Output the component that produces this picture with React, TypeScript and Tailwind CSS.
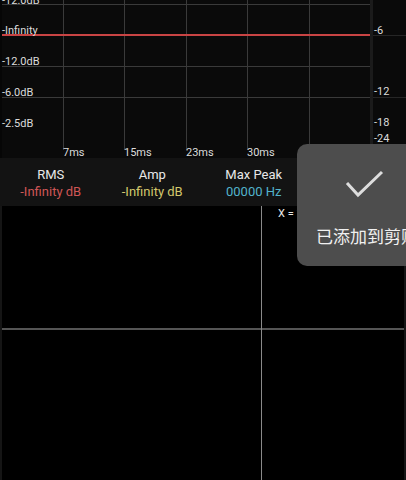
import React from 'react';

const hLines = [4, 66, 97];
const vLines = [63, 124, 186, 247, 309];

const yLabels = [
    { text: '-12.0dB', top: -6 },
    { text: '-Infinity', top: 24 },
    { text: '-12.0dB', top: 55 },
    { text: '-6.0dB', top: 86 },
    { text: '-2.5dB', top: 117 },
];

const xLabels = [
    { text: '7ms', left: 63 },
    { text: '15ms', left: 124 },
    { text: '23ms', left: 186 },
    { text: '30ms', left: 247 },
];

const dbLabels = [
    { text: '-6', top: 24 },
    { text: '-12', top: 85 },
    { text: '-18', top: 116 },
    { text: '-24', top: 132 },
];

const stats = [
    { label: 'RMS', value: '-Infinity dB', color: 'text-[#d05656]' },
    { label: 'Amp', value: '-Infinity dB', color: 'text-[#d2c86c]' },
    { label: 'Max Peak', value: '00000 Hz', color: 'text-[#52b3cc]' },
    { label: 'Freq', value: '00000 Hz', color: 'text-[#52b3cc]' },
];

export default function App() {
    return (
        <div className="relative w-[406px] h-[480px] overflow-hidden bg-black flex flex-col font-['Roboto','Noto_Sans_CJK_SC',sans-serif]">
            {/* waveform chart */}
            <div className="h-[158px] flex bg-[#0a0a0a]">
                <div className="relative w-[370px] h-full border-l-2 border-[#060606]">
                    <svg className="absolute inset-0" width="368" height="158">
                        {hLines.map((y) => (
                            <line key={y} x1="0" x2="368" y1={y + 0.5} y2={y + 0.5} stroke="#3a3a3a" strokeWidth="1" />
                        ))}
                        {vLines.map((x) => (
                            <line key={x} x1={x - 1.5} x2={x - 1.5} y1="0" y2="150" stroke="#3a3a3a" strokeWidth="1" />
                        ))}
                    </svg>
                    {/* level line */}
                    <div className="absolute left-0 right-0 top-[34px] h-[2px] bg-[#c94444]" />
                    {yLabels.map((l, i) => (
                        <span key={i} className="absolute left-0 text-[11px] leading-[13px] text-[#dcdcdc]" style={{ top: l.top }}>
                            {l.text}
                        </span>
                    ))}
                    {xLabels.map((l) => (
                        <span key={l.text} className="absolute top-[146px] text-[11px] leading-[13px] text-[#dcdcdc]" style={{ left: l.left - 2 }}>
                            {l.text}
                        </span>
                    ))}
                </div>
                <div className="w-[3px] h-full bg-[#1b1b1b]" />
                <div className="relative flex-1 h-full">
                    <svg className="absolute inset-0" width="33" height="158">
                        <line x1="0" x2="33" y1="35.5" y2="35.5" stroke="#262626" strokeWidth="1" />
                        <line x1="0" x2="33" y1="97.5" y2="97.5" stroke="#262626" strokeWidth="1" />
                    </svg>
                    {dbLabels.map((l) => (
                        <span key={l.text} className="absolute left-[1px] text-[11px] leading-[13px] text-[#dcdcdc]" style={{ top: l.top }}>
                            {l.text}
                        </span>
                    ))}
                </div>
            </div>

            {/* stats bar */}
            <div className="h-[48px] grid grid-cols-4 bg-[#131313] pt-[8px]">
                {stats.map((s) => (
                    <div key={s.label} className="flex flex-col items-center">
                        <span className="text-[13px] leading-[17px] text-[#e8e8e8]">{s.label}</span>
                        <span className={`text-[13px] leading-[17px] ${s.color}`}>{s.value}</span>
                    </div>
                ))}
            </div>

            {/* scope */}
            <div className="relative flex-1 bg-black border-l-2 border-r-2 border-[#151515]">
                <svg className="absolute inset-0" width="402" height="274">
                    <line x1="0" x2="402" y1="123" y2="123" stroke="#555555" strokeWidth="2" />
                    <line x1="259.5" x2="259.5" y1="0" y2="274" stroke="#8a8a8a" strokeWidth="1" />
                </svg>
                <span className="absolute left-[276px] top-[1px] text-[11px] leading-[13px] text-[#e8e8e8]">X = 1</span>
            </div>

            {/* toast */}
            <div className="absolute left-[297px] top-[144px] w-[130px] h-[122px] rounded-[10px] bg-[#4d4d4d] flex flex-col items-start">
                <svg className="ml-[48px] mt-[26px]" width="40" height="30" viewBox="0 0 40 30">
                    <path d="M2 13 L13 25 L37 2" fill="none" stroke="#dddddd" strokeWidth="3" />
                </svg>
                <span className="ml-[19px] mt-[26px] whitespace-nowrap text-[17px] leading-[22px] text-[#f0f0f0]">已添加到剪贴板</span>
            </div>
        </div>
    );
}
